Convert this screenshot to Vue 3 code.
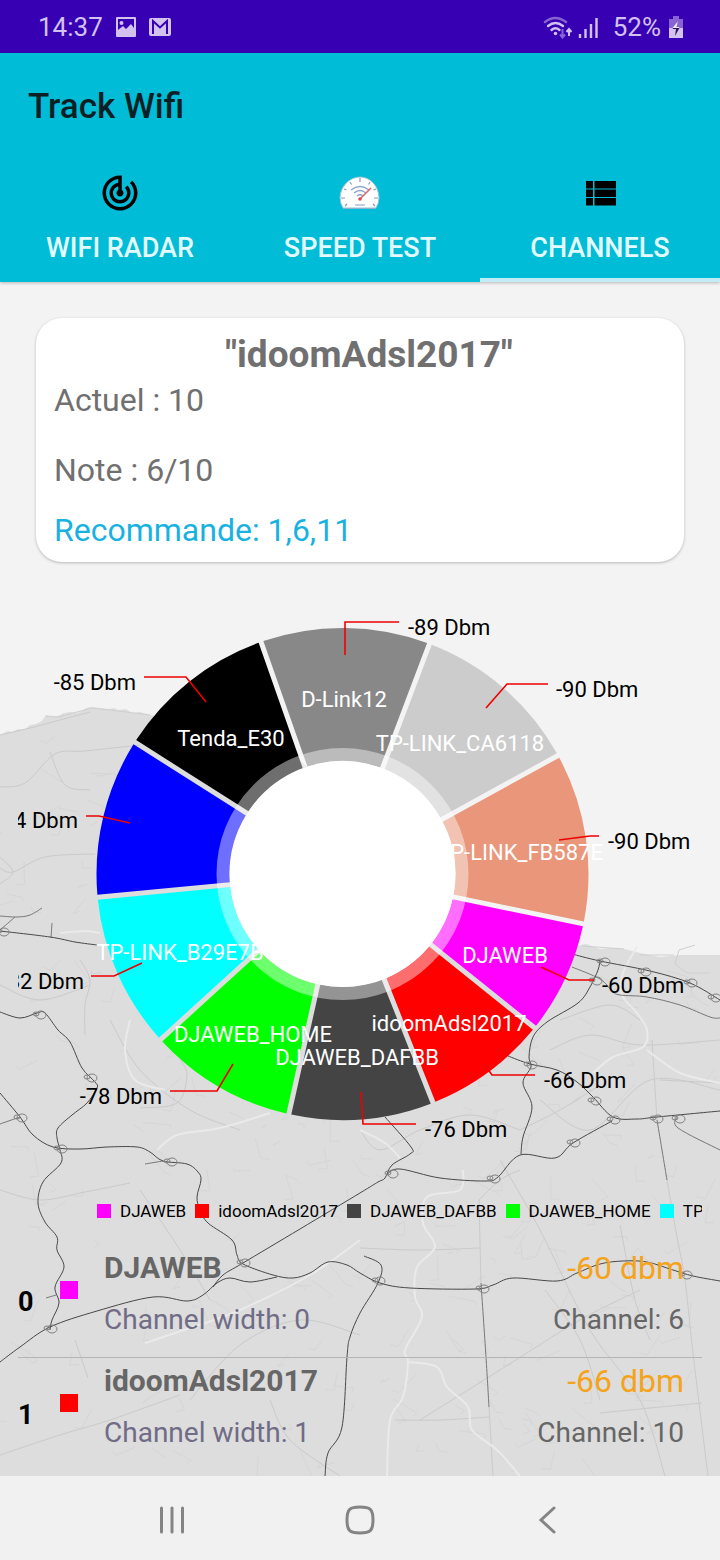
<script setup>
const tabs = ['WIFI RADAR', 'SPEED TEST', 'CHANNELS']

const networks = [
  { ssid: 'DJAWEB', dbm: 60, color: '#ff00ff', tx: 505, ty: 963, line: '541,967 569,980 594,980', vx: 602, vy: 993, anchor: 'start' },
  { ssid: 'idoomAdsl2017', dbm: 66, color: '#ff0000', tx: 449, ty: 1031, line: '487,1068 492,1075 535,1075', vx: 544, vy: 1088, anchor: 'start' },
  { ssid: 'DJAWEB_DAFBB', dbm: 76, color: '#444444', tx: 357, ty: 1065, line: '361,1092 363,1124 416,1124', vx: 425, vy: 1137, anchor: 'start' },
  { ssid: 'DJAWEB_HOME', dbm: 78, color: '#00ff00', tx: 253, ty: 1042, line: '233,1064 217,1091 170,1091', vx: 162, vy: 1104, anchor: 'end' },
  { ssid: 'TP-LINK_B29E7B', dbm: 82, color: '#00ffff', tx: 180, ty: 960, line: '142,963 114,976 91,976', vx: 84, vy: 989, anchor: 'end' },
  { ssid: '', dbm: 84, color: '#0000ff', tx: 168, ty: 824, line: '130,823 99,816 86,816', vx: 78, vy: 828, anchor: 'end' },
  { ssid: 'Tenda_E30', dbm: 85, color: '#000000', tx: 231, ty: 746, line: '206,702 186,677 144,677', vx: 136, vy: 690, anchor: 'end' },
  { ssid: 'D-Link12', dbm: 89, color: '#888888', tx: 344, ty: 707, line: '345,655 345,622 399,622', vx: 408, vy: 635, anchor: 'start' },
  { ssid: 'TP-LINK_CA6118', dbm: 90, color: '#cccccc', tx: 460, ty: 751, line: '486,708 507,684 548,684', vx: 556, vy: 697, anchor: 'start' },
  { ssid: 'TP-LINK_FB587E', dbm: 90, color: '#e9967a', tx: 520, ty: 860, line: '559,840 590,836 599,836', vx: 608, vy: 849, anchor: 'start' },
]

const legend = networks.filter((n) => n.ssid).slice(0, 5)

const rows = [
  { id: 0, ssid: 'DJAWEB', color: '#ff00ff', width: 0, dbm: -60, channel: 6 },
  { id: 1, ssid: 'idoomAdsl2017', color: '#ff0000', width: 1, dbm: -66, channel: 10 },
]

const cx = 342.5
const cy = 874
const outer = 246
const hole = 113
const total = networks.reduce((sum, n) => sum + n.dbm, 0)

function point(r, a) {
  return `${(cx + r * Math.cos(a)).toFixed(2)} ${(cy + r * Math.sin(a)).toFixed(2)}`
}

let angle = (11.7 * Math.PI) / 180
const slices = networks.map((n) => {
  const from = angle
  angle += (n.dbm / total) * Math.PI * 2
  const to = angle
  const o = Math.asin(2.5 / outer)
  const i = Math.asin(2.5 / hole)
  return {
    color: n.color,
    d: `M${point(outer, from + o)} A${outer} ${outer} 0 0 1 ${point(outer, to - o)} L${point(hole, to - i)} A${hole} ${hole} 0 0 0 ${point(hole, from + i)}Z`,
  }
})

// Turns "x,y x,y ..." into a smooth curve through every point.
function curve(text) {
  const p = text.split(' ').map((s) => s.split(',').map(Number))
  let d = `M${p[0]}`
  for (let k = 0; k < p.length - 1; k++) {
    const a = p[k - 1] || p[k]
    const b = p[k]
    const c = p[k + 1]
    const e = p[k + 2] || c
    d += ` C${b[0] + (c[0] - a[0]) / 6},${b[1] + (c[1] - a[1]) / 6} ${c[0] - (e[0] - b[0]) / 6},${c[1] - (e[1] - b[1]) / 6} ${c}`
  }
  return d
}

const highways = [
  '0,931 50,937 75,942 97,945',
  '0,1012 20,1018 37,1013 45,1013 58,1030 70,1042 82,1068 95,1082 97,1088 87,1103 72,1115 58,1128 57,1138 60,1150 61,1163 43,1182 38,1203 45,1222 57,1237 57,1250 64,1267 55,1287 59,1303 52,1320 50,1330',
  '0,1093 20,1117 33,1135 53,1147 80,1149 107,1147 137,1147 150,1152 163,1161 187,1164 198,1172 201,1180 197,1197 200,1210 208,1223 232,1240 237,1255 243,1264 273,1275 293,1278 310,1273 328,1262 347,1265 360,1273 380,1283 410,1288 475,1289 493,1285 513,1278 557,1281 577,1273 600,1264 623,1261 647,1262 673,1270 693,1276 720,1281',
  '0,1362 20,1347 50,1327 97,1311 153,1297 187,1301 203,1295 217,1283 230,1278 250,1282 277,1277',
  '213,1287 223,1275 243,1263 300,1229 360,1193 378,1182 385,1178 392,1165 410,1154 411,1147 385,1117',
  '387,1174 400,1169 440,1178 485,1181 498,1177 520,1155 555,1158 573,1143 612,1121',
  '600,960 598,970 590,987 578,1003 547,1022 533,1037 529,1057 531,1067 523,1083 532,1107 523,1137 521,1154',
  '508,1056 530,1064 557,1070 577,1082 593,1097 613,1117 637,1119 657,1117 720,1111',
  '364,1256 381,1265 378,1283 360,1313 350,1337 347,1357 342,1427 328,1453 325,1476',
  '572,954 600,961 650,971 690,983 720,1000',
].map(curve)

const lanes = [
  '0,916 17,917 30,915 42,908',
  '0,930 15,917',
  '51,938 52,923',
  '0,1124 20,1117',
  '677,1117 678,1128 720,1150',
  '572,967 600,979 612,991 620,995 647,997 680,1005 710,1017 720,1018',
  '657,1120 667,1180',
  '481,1283 486,1357 489,1407',
  '46,1298 56,1295',
  '145,1164 163,1161',
].map(curve)

const byways = [
  '479,1200 481,1283',
  '652,1040 657,1120',
  '667,1180 677,1237 685,1280 693,1353 708,1476',
  '489,1407 493,1476',
  '479,1200 500,1180 520,1170',
  '0,868 13,872 45,857 95,854',
  '0,857 13,872 0,884',
  '0,787 25,783 55,754 85,751 140,745',
  '50,752 65,785 90,790',
  '0,735 30,728 60,720 90,712',
  '180,1060 187,1075 177,1103 140,1108',
  '80,960 90,980 85,1005 85,1035',
  '520,1130 560,1110 600,1085',
  '360,1130 380,1150 420,1130 470,1115 520,1130',
  '0,1190 40,1200 85,1192 130,1183',
  '75,1340 88,1378',
  '190,1400 240,1345 300,1320 360,1335',
  '0,1455 60,1435 110,1420 180,1395',
  '420,1420 500,1370 580,1320 640,1290',
  '500,1160 540,1230 590,1330 640,1400 665,1476',
  '600,1413 650,1408 702,1403',
  '545,1290 580,1340 600,1400',
  '395,1420 440,1420 489,1417',
  '620,1225 635,1300 650,1340',
  '360,1248 420,1250 480,1248',
  '550,1050 590,1035 640,1045 720,1040',
  '560,1020 610,1005 640,1020',
  '540,1100 590,1130 650,1080 720,1090',
  '660,1080 720,1083',
  '110,1020 140,1070 190,1110 240,1130',
  '270,1400 290,1440 340,1476',
  '0,985 40,1000 90,985',
  '140,1190 180,1250 210,1300',
].map(curve)

const rivers = [
  '637,947 623,973 622,995 637,1013 647,1030 643,1047 613,1057 593,1073',
  '647,1050 680,1073 720,1083',
  '463,1170 460,1190 427,1197 423,1223 435,1247 417,1267 415,1297 422,1317 405,1350 408,1362 403,1397 390,1420 387,1476',
  '408,1362 437,1367 447,1387 468,1407 472,1430 497,1450 520,1476',
  '157,1150 177,1135 220,1128 270,1113',
  '130,1020 125,1050 135,1080 165,1090',
  '145,1343 190,1328 240,1310 310,1275 360,1240',
  '60,933 85,931 100,933',
  '360,1130 385,1143 400,1158',
].map(curve)

const junctions = [
  [20, 1117], [60, 1148], [90, 1077], [39, 1014], [2, 931], [170, 1161], [243, 1262], [378, 1280], [482, 1288],
  [685, 1274], [391, 1173], [493, 1178], [530, 1064], [594, 1100], [656, 1118], [678, 1118], [573, 1142],
  [613, 1119], [690, 982], [714, 997], [644, 971], [595, 980], [50, 1328], [603, 961],
]

// Faint street grain, generated from a fixed seed so that it is stable.
let seed = 7
function rand() {
  seed = (seed * 16807) % 2147483647
  return seed / 2147483647
}
const streets = Array.from({ length: 260 }, () => {
  const x = rand() * 720
  const y = (x < 140 ? 735 : 965) + rand() * (x < 140 ? 735 : 505)
  const a = rand() * 6.28
  const l = 6 + rand() * 22
  const x2 = x + Math.cos(a) * l
  const y2 = y + Math.abs(Math.sin(a)) * l
  return `M${x.toFixed(1)} ${y.toFixed(1)}L${x2.toFixed(1)} ${y2.toFixed(1)}l${(Math.sin(a) * 9).toFixed(1)} ${(Math.cos(a) * 4).toFixed(1)}`
}).join('')
</script>

<template>
  <div class="screen">
    <div class="status">
      <div class="status-side">
        <span>14:37</span>
        <svg width="22" height="22" viewBox="0 0 22 22" aria-hidden="true">
          <path fill="#d3c1f0" fill-rule="evenodd" d="M2 1h18a1 1 0 0 1 1 1v18a1 1 0 0 1-1 1H2a1 1 0 0 1-1-1V2a1 1 0 0 1 1-1ZM3 14l5-4 3 3 5-5 3 4V3H3ZM6.500 5a2 2 0 1 1 0 4a2 2 0 0 1 0-4Z" />
        </svg>
        <svg width="22" height="20" viewBox="0 0 22 20" aria-hidden="true">
          <rect x="0" y="1" width="22" height="18" rx="2" fill="#d3c1f0" />
          <path d="M4 17V4l7 6.500L18 4v13" fill="none" stroke="#3700b3" stroke-width="2" />
        </svg>
      </div>
      <div class="status-side right">
        <svg width="56" height="24" viewBox="0 0 56 24" aria-hidden="true">
          <g fill="none" stroke-linecap="round">
            <path d="M2 7q10-8 21 0" stroke="#8a63d2" stroke-width="2.400" />
            <path d="M5 11q7.500-6 15 0M8.500 15q4-3.500 8 0" stroke="#d3c1f0" stroke-width="2.400" />
          </g>
          <circle cx="12.500" cy="18.500" r="1.800" fill="#d3c1f0" />
          <path d="M19.500 14v8M17 19.500l2.500 3 2.500-3" fill="none" stroke="#8a63d2" stroke-width="2" />
          <path d="M26 21v-7M23.500 17l2.500-3 2.500 3" fill="none" stroke="#d3c1f0" stroke-width="2" />
          <path d="M37 19v4M42.500 14v9M48 9v14M53.500 3v20" stroke="#d3c1f0" stroke-width="2.400" />
        </svg>
        <span class="percent">52%</span>
        <svg width="16" height="24" viewBox="0 0 16 24" aria-hidden="true">
          <path d="M5 1h6v3h4v9H1V4h4Z" fill="#8a63d2" />
          <path d="M1 13h14v10H1Z" fill="#d3c1f0" />
          <path d="M10 6l-2 6h4L7 21l1-7H4.500Z" fill="#2b1466" />
          <path d="M10 6l-1.500 6H12l-1 1H4.500Z" fill="#efe8fb" />
        </svg>
      </div>
    </div>

    <header class="bar">
      <h1>Track Wifi</h1>
      <nav class="tabs">
        <button v-for="(t, i) in tabs" :key="t" type="button" :class="{ active: i === 2 }">
          <svg v-if="i === 0" width="42" height="42" viewBox="0 0 24 24" aria-hidden="true">
            <path d="M19.070 4.930l-1.410 1.410C19.100 7.790 20 9.790 20 12c0 4.420-3.580 8-8 8s-8-3.580-8-8c0-4.080 3.050-7.440 7-7.930v2.020C8.160 6.570 6 9.030 6 12c0 3.310 2.690 6 6 6s6-2.690 6-6c0-1.660-.67-3.160-1.760-4.240l-1.410 1.410C15.550 9.900 16 10.900 16 12c0 2.210-1.790 4-4 4s-4-1.790-4-4c0-1.860 1.280-3.410 3-3.860v2.140c-.6.350-1 .98-1 1.720 0 1.100.9 2 2 2s2-.9 2-2c0-.74-.4-1.380-1-1.720V2h-1C6.480 2 2 6.480 2 12s4.480 10 10 10 10-4.480 10-10c0-2.760-1.120-5.260-2.930-7.070Z" />
          </svg>
          <svg v-else-if="i === 1" width="42" height="42" viewBox="0 0 42 42" aria-hidden="true">
            <path d="M4 36a19 19 0 0 1-3-10C1 15 10 5 21 5s19 10 19 21a19 19 0 0 1-3 10Z" fill="#fff" stroke="#8fc3d8" stroke-width="1" />
            <path d="M4 36.500h33" stroke="#8fb0d2" stroke-width="1" />
            <path d="M21 6v4M11 10l1.500 2.500M31 10l-1.500 2.500M5 17l2.500 1M37 17l-2.500 1M2 26h4M39 26h-4M6 34l2-2M36 34l-2-2M16 33h10" stroke="#8e9ab4" stroke-width="1.200" />
            <path d="M12 18q9-7 18 0M15 21q6-5 12 0M18 24q3-2.500 6 0" fill="none" stroke="#8aa5cb" stroke-width="1.400" />
            <path d="M21 27l11-11" stroke="#d86a72" stroke-width="1.600" />
            <circle cx="21" cy="27" r="1.800" fill="#d84a55" />
          </svg>
          <svg v-else width="42" height="42" viewBox="0 0 42 42" aria-hidden="true">
            <path d="M7 9h7v7.500H7ZM15.500 9H37v7.500H15.500ZM7 17.500h7v7.500H7ZM15.500 17.500H37v7.500H15.500ZM7 26h7v7.500H7ZM15.500 26H37v7.500H15.500Z" />
          </svg>
          <span>{{ t }}</span>
        </button>
      </nav>
    </header>

    <main class="content">
      <svg class="map" viewBox="0 282 720 1194" preserveAspectRatio="xMidYMin slice" aria-hidden="true">
        <path fill="#dddddd" d="M0 735L8 731 12 732 18 729 24 730 30 725 36 724 42 721 46 715 52 717 58 716 64 713 70 712 76 713 80 712 86 708 92 707 100 708 108 709 114 708 118 710 126 709 132 713 140 712 150 715 170 720 270 700 300 760 440 895 575 946 586 944 600 949 612 948 624 949 640 953 660 957 680 955 720 955V1476H0Z" />
        <path fill="none" stroke="#cfcfcf" stroke-width="1" d="M46 716L58 717 92 708 118 711 150 715M582 946L624 949M640 955H674M695 945l-16 5-4 14 12 9h22" />
        <path class="streets" :d="streets" />
        <path v-for="d in byways" :key="d" class="byway" :d="d" />
        <path v-for="d in rivers" :key="d" class="river" :d="d" />
        <path v-for="d in lanes" :key="d" class="lane" :d="d" />
        <path v-for="d in highways" :key="d" class="highway" :d="d" />
        <g v-for="[x, y] in junctions" :key="`${x}-${y}`" class="junction">
          <ellipse :cx="x - 3" :cy="y" rx="3" ry="2" />
          <ellipse :cx="x + 2" :cy="y + 1" rx="5" ry="4" />
        </g>
      </svg>

      <section class="card">
        <h2>"idoomAdsl2017"</h2>
        <p>Actuel : 10</p>
        <p class="note">Note : 6/10</p>
        <p class="advice">Recommande: 1,6,11</p>
      </section>

      <section class="chart">
        <svg viewBox="18 598 684 596" role="img" aria-label="Signal strength by network">
          <path v-for="s in slices" :key="s.d" :d="s.d" :fill="s.color" />
          <circle :cx="cx" :cy="cy" r="119.500" fill="none" stroke="#ffffff" stroke-opacity="0.430" stroke-width="13" />
          <circle :cx="cx" :cy="cy" :r="hole" fill="#ffffff" />
          <g v-for="n in networks" :key="n.color">
            <polyline :points="n.line" fill="none" stroke="#ee0000" stroke-width="1.600" />
            <text :x="n.vx" :y="n.vy" :text-anchor="n.anchor">-{{ n.dbm }} Dbm</text>
            <text class="label" :x="n.tx" :y="n.ty">{{ n.ssid }}</text>
          </g>
        </svg>
        <ul class="legend">
          <li v-for="n in legend" :key="n.ssid">
            <i :style="{ background: n.color }"></i>{{ n.ssid }}
          </li>
        </ul>
      </section>

      <ul class="list">
        <li v-for="r in rows" :key="r.id">
          <b class="index">{{ r.id }}</b>
          <i :style="{ background: r.color }"></i>
          <div class="info">
            <strong>{{ r.ssid }}</strong>
            <span class="width">Channel width: {{ r.width }}</span>
          </div>
          <div class="info signal">
            <span class="dbm">{{ r.dbm }} dbm</span>
            <span>Channel: {{ r.channel }}</span>
          </div>
        </li>
      </ul>
    </main>

    <nav class="system">
      <button type="button" aria-label="Recent apps">
        <svg width="32" height="32" viewBox="0 0 32 32"><path d="M5.500 4v24M16 4v24M26.500 4v24" /></svg>
      </button>
      <button type="button" aria-label="Home">
        <svg width="32" height="32" viewBox="0 0 32 32"><path d="M16 3C26 3 29 5 29 16S26 29 16 29 3 27 3 16 6 3 16 3Z" /></svg>
      </button>
      <button type="button" aria-label="Back">
        <svg width="32" height="32" viewBox="0 0 32 32"><path d="M22 4L9 16l13 12" /></svg>
      </button>
    </nav>
  </div>
</template>

<style>
body {
  margin: 0;
}
</style>

<style scoped>
.screen {
  display: flex;
  flex-direction: column;
  height: 100vh;
  overflow: hidden;
  background: #f3f3f3;
  font-family: Roboto, "Noto Sans", sans-serif;
  color: #666666;
}
h1, h2, p, ul {
  margin: 0;
  padding: 0;
}
ul {
  list-style: none;
}
button {
  border: 0;
  padding: 0;
  background: none;
  font: inherit;
  color: inherit;
}
svg {
  display: block;
}
.status {
  display: flex;
  justify-content: space-between;
  align-items: center;
  flex: none;
  height: 53px;
  padding: 0 36px 0 38px;
  box-sizing: border-box;
  background: #3700b3;
  color: #d3c1f0;
  font-size: 26px;
}
.status-side {
  display: flex;
  align-items: center;
  gap: 12px;
}
.right {
  gap: 7px;
}
.percent {
  margin-left: 7px;
}
.bar {
  position: relative;
  z-index: 1;
  flex: none;
  background: #00bcd7;
  box-shadow: 0 1px 3px rgba(0, 0, 0, 0.250);
}
h1 {
  padding: 2px 28px 0;
  font-size: 35px;
  line-height: 104px;
  font-weight: 500;
  color: #0b1f24;
}
.tabs {
  display: grid;
  grid-template-columns: repeat(3, 1fr);
}
.tabs button {
  display: flex;
  flex-direction: column;
  align-items: center;
  gap: 16px;
  height: 123px;
  padding-top: 13px;
  box-sizing: border-box;
  font-size: 27px;
  line-height: 36px;
  font-weight: 500;
  color: #e3fbff;
}
.tabs .active {
  border-bottom: 4px solid #c4ecf6;
}
.content {
  position: relative;
  flex: 1;
  min-height: 0;
  overflow: hidden;
  padding: 36px 18px 0;
}
.map {
  position: absolute;
  inset: 0;
  width: 100%;
  height: 100%;
}
.streets {
  fill: none;
  stroke: #d6d6d6;
  stroke-width: 1px;
}
.byway {
  fill: none;
  stroke: #cacaca;
  stroke-width: 1px;
}
.river {
  fill: none;
  stroke: #eaeaea;
  stroke-width: 2px;
}
.lane {
  fill: none;
  stroke: #777777;
  stroke-width: 1px;
}
.highway {
  fill: none;
  stroke: #484848;
  stroke-width: 1px;
}
.junction {
  fill: none;
  stroke: #808080;
  stroke-width: 1px;
}
.card, .chart, .list {
  position: relative;
}
.card {
  margin: 0 18px;
  height: 244px;
  padding: 16px 0 0 18px;
  box-sizing: border-box;
  border-radius: 26px;
  background: #ffffff;
  box-shadow: 0 1px 3px rgba(0, 0, 0, 0.250);
  font-size: 32px;
  line-height: 44px;
  color: #707070;
}
h2 {
  padding-bottom: 2px;
  text-align: center;
  font-size: 37px;
  line-height: 42px;
  font-weight: 700;
}
.card .note {
  margin-top: 26px;
}
.card .advice {
  margin-top: 16px;
  color: #19b2e0;
}
.chart {
  margin-top: 36px;
}
.chart text {
  font-size: 22px;
  fill: #000000;
}
.chart .label {
  text-anchor: middle;
  fill: #ffffff;
}
.legend {
  display: flex;
  gap: 9px;
  padding: 5px 0 6px 79px;
  overflow: hidden;
  white-space: nowrap;
  font-size: 17px;
  line-height: 24px;
  color: #000000;
}
.legend li {
  display: flex;
  align-items: center;
  flex: none;
  gap: 9px;
}
.legend i {
  width: 14px;
  height: 14px;
}
.list {
  margin-top: 16px;
}
.list li {
  display: flex;
  align-items: flex-start;
  height: 113px;
  padding-right: 18px;
  box-sizing: border-box;
  border-bottom: 1px solid #b4b4b4;
  font-size: 28px;
}
.list li:last-child {
  border-bottom: 0;
}
.index {
  width: 42px;
  padding-top: 39px;
  line-height: 36px;
  font-size: 27px;
  color: #000000;
}
.list i {
  width: 18px;
  height: 18px;
  margin-top: 36px;
}
.info {
  display: flex;
  flex-direction: column;
  gap: 16px;
  margin-left: 26px;
  padding-top: 5px;
  line-height: 36px;
}
.info strong {
  font-size: 30px;
}
.width {
  color: #706c86;
}
.signal {
  margin-left: auto;
  text-align: right;
}
.dbm {
  font-size: 32px;
  color: #f5a31a;
}
.system {
  display: grid;
  grid-template-columns: repeat(3, 188px);
  justify-content: center;
  flex: none;
  height: 84px;
  padding-top: 3px;
  box-sizing: border-box;
  background: #f1f1f1;
}
.system button {
  display: grid;
  place-items: center;
}
.system svg {
  fill: none;
  stroke: #848484;
  stroke-width: 3px;
  stroke-linecap: round;
}
</style>
